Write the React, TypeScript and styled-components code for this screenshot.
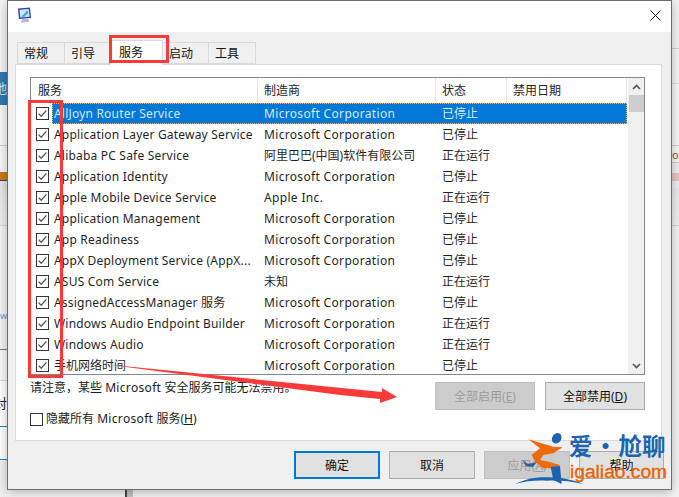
import React from 'react'
import styled, { createGlobalStyle } from 'styled-components'

const GlobalStyle = createGlobalStyle`
  html, body {
    margin: 0;
    padding: 0;
    background: #f4f4f4;
  }
  body {
    font-family: "Noto Sans", "Noto Sans CJK SC", sans-serif;
    font-size: 12px;
    color: #1a1a1a;
  }
`

const Page = styled.div`
  position: relative;
  width: 679px;
  height: 497px;
  overflow: hidden;
  display: flex;
  align-items: flex-start;
`

const Strip = styled.div`
  flex: none;
  width: 7px;
  height: 497px;
  overflow: hidden;
  display: flex;
  flex-direction: column;
`

const Band = styled.div<{ $h: number; $bg?: string; $line?: string; $color?: string; $size?: number }>`
  flex: none;
  height: ${p => p.$h}px;
  box-sizing: border-box;
  background: ${p => p.$bg || 'transparent'};
  border-bottom: ${p => (p.$line ? `1px solid ${p.$line}` : 'none')};
  color: ${p => p.$color || '#1a1a1a'};
  display: flex;
  align-items: center;
  justify-content: flex-end;
  font-size: ${p => p.$size || 13}px;
  line-height: 1;
  white-space: nowrap;
`

const RightBand = styled(Band)`
  justify-content: flex-start;
`

const CenterColumn = styled.div`
  flex: none;
  width: 665px;
  display: flex;
  flex-direction: column;
`

const Dialog = styled.div`
  flex: none;
  height: 490px;
  box-sizing: border-box;
  background: #f0f0f0;
  border: 1px solid #6e6e6e;
  box-shadow: 0 2px 10px rgba(0, 0, 0, 0.28);
  position: relative;
  z-index: 1;
  display: flex;
  flex-direction: column;
`

const BottomEdge = styled.div`
  flex: none;
  height: 7px;
  padding-left: 118px;
`

const BottomMark = styled.div`
  width: 8px;
  height: 7px;
  box-sizing: border-box;
  background: #c4c4c4;
  border-left: 2px solid #444;
`

const TitleBar = styled.div`
  flex: none;
  height: 31px;
  box-sizing: border-box;
  background: #fff;
  display: flex;
  align-items: center;
  justify-content: space-between;
  padding: 0 10px 2px 9px;
`

const Body = styled.div`
  flex: 1;
  display: flex;
  flex-direction: column;
  padding: 10px 9px 0 7px;
`

const Tabs = styled.div`
  flex: none;
  display: flex;
  height: 23px;
  padding-left: 3px;
  position: relative;
  z-index: 1;
`

const Tab = styled.div<{ $active?: boolean; $w: number }>`
  flex: none;
  width: ${p => p.$w}px;
  box-sizing: border-box;
  height: ${p => (p.$active ? 25 : 22)}px;
  margin-top: ${p => (p.$active ? -2 : 0)}px;
  background: ${p => (p.$active ? '#fff' : '#f0f0f0')};
  border: 1px solid #d9d9d9;
  border-bottom: ${p => (p.$active ? 'none' : '1px solid #d9d9d9')};
  margin-left: -1px;
  padding-left: ${p => (p.$active ? 8 : 6)}px;
  line-height: ${p => (p.$active ? 23 : 21)}px;
  color: #111;
`

const Panel = styled.div`
  flex: none;
  height: 377px;
  box-sizing: border-box;
  background: #fff;
  border: 1px solid #d9d9d9;
  margin-top: -1px;
  padding: 12px 16px 0 14px;
  display: flex;
  flex-direction: column;
`

const ListBox = styled.div`
  flex: none;
  height: 298px;
  box-sizing: border-box;
  border: 1px solid #828790;
  display: flex;
  overflow: hidden;
`

const ListMain = styled.div`
  flex: none;
  width: 596px;
  overflow: hidden;
`

const HeaderRow = styled.div`
  display: grid;
  grid-template-columns: 227px 178px 71px 120px;
  height: 25px;
  background: #fff;
`

const HeaderCell = styled.div<{ $first?: boolean }>`
  padding-left: ${p => (p.$first ? 7 : 6)}px;
  line-height: 25px;
  border-right: 1px solid #e5e5e5;
  color: #222;
`

const Row = styled.div`
  display: grid;
  grid-template-columns: 227px 178px 71px 120px;
  height: 21px;
  line-height: 21px;
  white-space: nowrap;
  position: relative;
`

const NameCell = styled.div`
  display: flex;
  align-items: center;
  padding-left: 5px;
  gap: 5px;
  overflow: hidden;
`

const Cell = styled.div`
  padding-left: 6px;
  overflow: hidden;
`

const SelectedBar = styled.div`
  position: absolute;
  left: 21px;
  right: 0;
  top: 0;
  bottom: 0;
  background: #0078d7;
  outline: 1px dotted #f3b06a;
  outline-offset: -1px;
`

const RowText = styled.span<{ $selected?: boolean; $latin?: boolean }>`
  position: relative;
  color: ${p => (p.$selected ? '#d6eafa' : '#1f1f1f')};
  letter-spacing: ${p => (p.$latin ? '0.2px' : '0')};
`

const CellText = styled(Cell)<{ $selected?: boolean; $latin?: boolean }>`
  position: relative;
  color: ${p => (p.$selected ? '#d6eafa' : '#1f1f1f')};
  letter-spacing: ${p => (p.$latin ? '0.33px' : '0')};
`

const Latin = styled.span`
  letter-spacing: 0.33px;
`

const CheckBox = styled.span`
  flex: none;
  position: relative;
  width: 13px;
  height: 13px;
  box-sizing: border-box;
  border: 1px solid #333;
  background: #fff;
  display: inline-flex;
  align-items: center;
  justify-content: center;
`

const ScrollBar = styled.div`
  flex: 1;
  background: #f0f0f0;
  display: flex;
  flex-direction: column;
  align-items: center;
  margin-left: 1px;
`

const ScrollArrow = styled.div`
  flex: none;
  height: 17px;
  display: flex;
  align-items: center;
  justify-content: center;
`

const ScrollThumb = styled.div`
  flex: none;
  width: 15px;
  height: 17px;
  background: #cdcdcd;
`

const ScrollTrack = styled.div`
  flex: 1;
`

const ActionsArea = styled.div`
  flex: none;
  display: grid;
  grid-template-columns: 1fr 100px 100px;
  column-gap: 10px;
  margin-top: 7px;
`

const Note = styled.div`
  margin-top: -3px;
  line-height: 18px;
  white-space: nowrap;
`

const Btn = styled.div<{ $disabled?: boolean; $primary?: boolean; $w?: number }>`
  flex: none;
  box-sizing: border-box;
  width: ${p => (p.$w ? `${p.$w}px` : 'auto')};
  height: 28px;
  background: ${p => (p.$disabled ? '#cccccc' : '#e1e1e1')};
  border: ${p => (p.$primary ? '2px solid #0078d7' : `1px solid ${p.$disabled ? '#bfbfbf' : '#adadad'}`)};
  color: ${p => (p.$disabled ? '#9c9c9c' : '#111')};
  display: flex;
  align-items: center;
  justify-content: center;
  white-space: nowrap;
`

const HideRow = styled.div`
  display: flex;
  align-items: center;
  gap: 3px;
  margin-top: 0;
  height: 18px;
  line-height: 18px;
`

const Footer = styled.div`
  flex: none;
  display: flex;
  justify-content: flex-end;
  gap: 9px;
  margin: 10px -2px 0 0;
`

const Key = styled.span`
  text-decoration: underline;
`

const RedRect = styled.div<{ $x: number; $y: number; $w: number; $h: number }>`
  position: absolute;
  z-index: 3;
  left: ${p => p.$x}px;
  top: ${p => p.$y}px;
  width: ${p => p.$w}px;
  height: ${p => p.$h}px;
  box-sizing: border-box;
  border: 3px solid #f93a3a;
`

const ArrowOverlay = styled.svg`
  position: absolute;
  z-index: 3;
  left: 0;
  top: 0;
  pointer-events: none;
`

const Watermark = styled.div`
  position: absolute;
  z-index: 4;
  left: 514px;
  top: 430px;
  width: 165px;
  height: 60px;
`

const WatermarkFigure = styled.svg`
  position: absolute;
  left: 0;
  top: 0;
  overflow: visible;
`

const BrandCn = styled.div`
  position: absolute;
  left: 55px;
  top: 0;
  font-family: "Noto Sans CJK SC", sans-serif;
  font-size: 23.5px;
  line-height: 31px;
  font-weight: 700;
  color: #1d63ae;
  white-space: nowrap;
  display: flex;
`

const BrandDot = styled.span`
  flex: none;
  width: 26px;
  text-align: center;
`

const BrandEn = styled.div`
  position: absolute;
  left: 56px;
  top: 29px;
  font-family: "Liberation Sans", sans-serif;
  font-size: 19.2px;
  line-height: 26px;
  color: #ea6000;
  white-space: nowrap;
  -webkit-text-stroke: 0.3px #ea6000;
`

const MS = 'Microsoft Corporation'

const services = [
  { name: 'AllJoyn Router Service', vendor: MS, state: '已停止' },
  { name: 'Application Layer Gateway Service', vendor: MS, state: '已停止' },
  { name: 'Alibaba PC Safe Service', vendor: '阿里巴巴(中国)软件有限公司', state: '正在运行' },
  { name: 'Application Identity', vendor: MS, state: '已停止' },
  { name: 'Apple Mobile Device Service', vendor: 'Apple Inc.', state: '正在运行' },
  { name: 'Application Management', vendor: MS, state: '已停止' },
  { name: 'App Readiness', vendor: MS, state: '已停止' },
  { name: 'AppX Deployment Service (AppX...', vendor: MS, state: '已停止' },
  { name: 'ASUS Com Service', vendor: '未知', state: '正在运行' },
  { name: 'AssignedAccessManager 服务', vendor: MS, state: '已停止' },
  { name: 'Windows Audio Endpoint Builder', vendor: MS, state: '正在运行' },
  { name: 'Windows Audio', vendor: MS, state: '正在运行' },
  { name: '手机网络时间', vendor: MS, state: '已停止' }
]

const tabs = [
  { label: '常规', w: 48 },
  { label: '引导', w: 47 },
  { label: '服务', w: 53, active: true },
  { label: '启动', w: 47 },
  { label: '工具', w: 48 }
]

const isLatin = (text: string) => /[A-Za-z]/.test(text)

const Check = () => (
  <svg width="11" height="11" viewBox="0 0 11 11">
    <path d="M1.6 5.6 L4.2 8.2 L9.4 2.4" fill="none" stroke="#555" strokeWidth="1.3" />
  </svg>
)

const MonitorIcon = () => (
  <svg width="15" height="17" viewBox="0 0 15 17">
    <path d="M1 1.5 L13 0.5 L14 11 L2 12 Z" fill="#2a45b8" />
    <path d="M2.6 2.8 L11.8 2 L12.5 9.8 L3.3 10.6 Z" fill="#cfe6f7" />
    <path d="M4.5 9.5 L10.5 3.2 L11.5 6 L7 10 Z" fill="#4f9fe0" />
    <path d="M5 12 L11 11.6 L12.5 15 L4 15.8 Z" fill="#b9bcc4" />
  </svg>
)

const CloseIcon = () => (
  <svg width="11" height="11" viewBox="0 0 11 11">
    <path d="M0.5 0.5 L10.5 10.5 M10.5 0.5 L0.5 10.5" stroke="#111" strokeWidth="1" fill="none" />
  </svg>
)

const Chevron = ({ down }: { down?: boolean }) => (
  <svg width="9" height="6" viewBox="0 0 9 6">
    <path
      d={down ? 'M1 1 L4.5 4.5 L8 1' : 'M1 5 L4.5 1.5 L8 5'}
      fill="none"
      stroke="#555"
      strokeWidth="1.7"
    />
  </svg>
)

export default function App() {
  return (
    <>
      <GlobalStyle />
      <Page>
        <Strip>
          <Band $h={72} $bg="#f4f4f4" />
          <Band $h={33} $bg="#2f78b4" $color="#cfe2f2">地</Band>
          <Band $h={41} $bg="#f7f7f7" $line="#d0d0d0" />
          <Band $h={35} $bg="linear-gradient(#f7f7f7 0 74%, #c9781e 74% 97%, #444 97%)" />
          <Band $h={45} $bg="linear-gradient(#e4e4e4, #f0f0f0)" $line="#d5d5d5" />
          <Band $h={84} $bg="#f5f5f5" />
          <Band $h={10} $bg="#f5f5f5" $color="#5b9bd5" $size={9}>w</Band>
          <Band $h={30} $bg="#f5f5f5" $line="#777" />
          <Band $h={31} $bg="#fafafa" $line="#dcdcdc" />
          <Band $h={46} $bg="#fff" $line="#2b7cc4" $color="#222">对</Band>
          <Band $h={33} $bg="#fff" $line="#2b7cc4" />
          <Band $h={37} $bg="#f0f0f0" />
        </Strip>
        <CenterColumn>
          <Dialog>
            <TitleBar>
              <MonitorIcon />
              <CloseIcon />
            </TitleBar>
            <Body>
              <Tabs>
                {tabs.map(t => (
                  <Tab key={t.label} $w={t.w} $active={t.active}>{t.label}</Tab>
                ))}
              </Tabs>
              <Panel>
                <ListBox>
                  <ListMain>
                    <HeaderRow>
                      <HeaderCell $first>服务</HeaderCell>
                      <HeaderCell>制造商</HeaderCell>
                      <HeaderCell>状态</HeaderCell>
                      <HeaderCell>禁用日期</HeaderCell>
                    </HeaderRow>
                    {services.map((s, i) => (
                      <Row key={s.name}>
                        {i === 0 && <SelectedBar />}
                        <NameCell>
                          <CheckBox><Check /></CheckBox>
                          <RowText $selected={i === 0} $latin={isLatin(s.name)}>{s.name}</RowText>
                        </NameCell>
                        <CellText $selected={i === 0} $latin={isLatin(s.vendor)}>{s.vendor}</CellText>
                        <CellText $selected={i === 0}>{s.state}</CellText>
                        <Cell />
                      </Row>
                    ))}
                  </ListMain>
                  <ScrollBar>
                    <ScrollArrow><Chevron /></ScrollArrow>
                    <ScrollThumb />
                    <ScrollTrack />
                    <ScrollArrow><Chevron down /></ScrollArrow>
                  </ScrollBar>
                </ListBox>
                <ActionsArea>
                  <Note>请注意，某些 <Latin>Microsoft</Latin> 安全服务可能无法禁用。</Note>
                  <Btn $disabled>全部启用(<Key>E</Key>)</Btn>
                  <Btn>全部禁用(<Key>D</Key>)</Btn>
                </ActionsArea>
                <HideRow>
                  <CheckBox />
                  <span>隐藏所有 <Latin>Microsoft</Latin> 服务(<Key>H</Key>)</span>
                </HideRow>
              </Panel>
              <Footer>
                <Btn $primary $w={86}>确定</Btn>
                <Btn $w={86}>取消</Btn>
                <Btn $disabled $w={86}>应用(<Key>A</Key>)</Btn>
                <Btn $w={85}>帮助</Btn>
              </Footer>
            </Body>
          </Dialog>
          <BottomEdge><BottomMark /></BottomEdge>
        </CenterColumn>
        <Strip>
          <RightBand $h={49} $bg="#f4f4f4" $line="#cfcfcf" />
          <RightBand $h={35} $bg="#f6f6f6" $line="#dcdcdc" />
          <RightBand $h={62} $bg="#f8f8f8" $line="#d0d0d0" />
          <RightBand $h={17} $bg="#f6f6f6" $line="#d0d0d0" $color="#8a5a2a" $size={11}>ox</RightBand>
          <RightBand $h={25} $bg="linear-gradient(#eee 0 40%, #e8c4c4 40% 70%, #eee 70%)" />
          <RightBand $h={38} $bg="linear-gradient(#eaeaea, #f2f2f2)" $line="#d5d5d5" />
          <RightBand $h={271} $bg="#f4f4f4" />
        </Strip>

        <RedRect $x={109} $y={35} $w={60} $h={28} />
        <RedRect $x={28} $y={100} $w={35} $h={278} />
        <ArrowOverlay width="679" height="497" viewBox="0 0 679 497">
          <path d="M103 364 L382 392 L382 388 L397 397 L380 403 L380 399 L340 395 Z" fill="#f93a3a" />
        </ArrowOverlay>

        <Watermark>
          <WatermarkFigure width="60" height="60" viewBox="0 0 60 60">
            <ellipse cx="42.7" cy="8.3" rx="4.5" ry="5.5" fill="#1d63ae" transform="rotate(35 42.7 8.3)" />
            <path
              d="M14.3 9.3 L39.3 16.7 L48.7 17.3 L39.3 23.3 L29.3 25 L26 30 L34.3 31.7 L46 35 L42.7 38.3 L29.3 38.3 L21 31.7 L17.7 25 L26 18.3 Z"
              fill="#ee6a0a"
            />
            <path d="M36.7 37 L46 36 L47.7 54 L39.3 50 Z" fill="#1d63ae" />
            <path d="M1 54 C14 48 24 47 33 47.3 C46 47 60 50 69.3 54 C56 51 44 50 33 50.7 C22 50 12 51 1 54 Z" fill="#1d63ae" />
            <path d="M8 30 L14 34 L23 32 L19 37 L12 36 Z" fill="#2f5f9e" />
          </WatermarkFigure>
          <BrandCn>爱<BrandDot>·</BrandDot>尬聊</BrandCn>
          <BrandEn>igaliao.com</BrandEn>
        </Watermark>
      </Page>
    </>
  )
}
